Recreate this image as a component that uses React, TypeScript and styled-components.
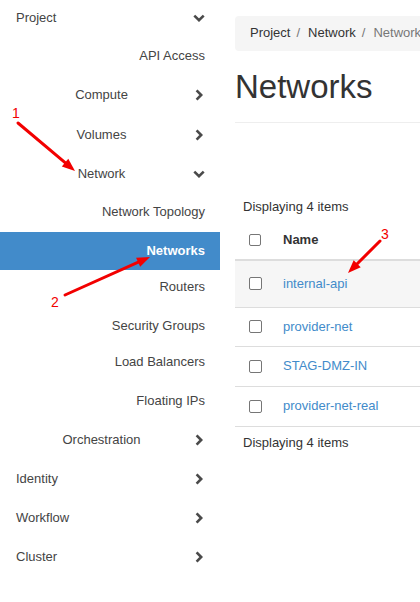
import React from 'react';
import styled, { createGlobalStyle } from 'styled-components';

const GlobalStyle = createGlobalStyle`
  html, body { margin: 0; padding: 0; background: #fff; overflow: hidden; }
  body {
    font-family: "Liberation Sans", Arial, Helvetica, sans-serif;
    font-size: 13px;
    line-height: 18px;
    color: #333;
  }
  * { box-sizing: border-box; }
`;

const Page = styled.div`
  position: relative;
  display: flex;
  width: 420px;
  height: 602px;
  overflow: hidden;
`;

/* ---------- Sidebar ---------- */

type Kind = 'top' | 'group' | 'sub';

const Sidebar = styled.nav`
  flex: 0 0 220px;
  display: flex;
  flex-direction: column;
`;

const NavRow = styled.div<{ $h: number; $active?: boolean }>`
  flex: 0 0 auto;
  display: flex;
  align-items: flex-start;
  height: ${(p) => p.$h}px;
  padding: ${(p) => (p.$active ? '9.5px' : '8.5px')} 15px 0 16px;
  background: ${(p) => (p.$active ? '#428bca' : 'transparent')};
`;

const NavLabel = styled.span<{ $kind: Kind; $active?: boolean }>`
  flex: 1 1 auto;
  min-width: 0;
  white-space: nowrap;
  text-align: ${(p) => (p.$kind === 'top' ? 'left' : p.$kind === 'group' ? 'center' : 'right')};
  color: ${(p) => (p.$active ? '#fff' : '#444')};
  font-weight: ${(p) => (p.$active ? 700 : 400)};
`;

const Chevron = styled.span`
  flex: 0 0 12px;
  margin-left: 6px;
  height: 18px;
  display: flex;
  align-items: center;
  justify-content: center;
  color: #4a4a4a;
`;

const ChevronDown = () => (
  <svg width="12" height="8" viewBox="0 0 12 8">
    <polyline points="1.3,1.6 6,6.2 10.7,1.6" fill="none" stroke="currentColor" strokeWidth="2.6" />
  </svg>
);

const ChevronRight = () => (
  <svg width="8" height="12" viewBox="0 0 8 12">
    <polyline points="1.6,1.3 6.2,6 1.6,10.7" fill="none" stroke="currentColor" strokeWidth="2.6" />
  </svg>
);

type NavItem = { label: string; kind: Kind; h: number; chevron?: 'down' | 'right'; active?: boolean };

const navItems: NavItem[] = [
  { label: 'Project', kind: 'top', h: 38.3, chevron: 'down' },
  { label: 'API Access', kind: 'sub', h: 39.3 },
  { label: 'Compute', kind: 'group', h: 40, chevron: 'right' },
  { label: 'Volumes', kind: 'group', h: 39, chevron: 'right' },
  { label: 'Network', kind: 'group', h: 38.4, chevron: 'down' },
  { label: 'Network Topology', kind: 'sub', h: 37.3 },
  { label: 'Networks', kind: 'sub', h: 37.7, active: true },
  { label: 'Routers', kind: 'sub', h: 38.3 },
  { label: 'Security Groups', kind: 'sub', h: 36.7 },
  { label: 'Load Balancers', kind: 'sub', h: 38.3 },
  { label: 'Floating IPs', kind: 'sub', h: 39 },
  { label: 'Orchestration', kind: 'group', h: 39.3, chevron: 'right' },
  { label: 'Identity', kind: 'top', h: 39, chevron: 'right' },
  { label: 'Workflow', kind: 'top', h: 39.4, chevron: 'right' },
  { label: 'Cluster', kind: 'top', h: 40, chevron: 'right' },
];

/* ---------- Main ---------- */

const Main = styled.main`
  flex: 1 1 auto;
  min-width: 0;
  overflow: hidden;
  padding-left: 15px;
`;

const Content = styled.div`
  width: 420px;
`;

const Breadcrumb = styled.ol`
  list-style: none;
  margin: 16px 0 0;
  padding: 8px 15px 0;
  height: 35px;
  display: flex;
  align-items: flex-start;
  background: #f5f5f5;
  border-radius: 4px;
  white-space: nowrap;
`;

const Crumb = styled.li<{ $current?: boolean }>`
  color: ${(p) => (p.$current ? '#777' : '#333')};
`;

const CrumbSep = styled.span`
  color: #777;
  margin: 0 8px 0 6px;
`;

const PageHeader = styled.div`
  border-bottom: 1px solid #eee;
  padding-bottom: 17px;
`;

const Title = styled.h1`
  margin: 18px 0 0;
  font-size: 33px;
  line-height: 36px;
  font-weight: 400;
  color: #333;
`;

const TableWrap = styled.div`
  margin-top: 74.5px;
`;

const Count = styled.div<{ $gap?: number }>`
  padding-left: 8px;
  margin-top: ${(p) => p.$gap ?? 0}px;
  height: 18px;
  color: #333;
`;

const HeaderRow = styled.div`
  display: flex;
  align-items: center;
  height: 45px;
  padding-top: 6px;
  border-bottom: 2px solid #ddd;
`;

const Row = styled.div<{ $h: number; $shade?: boolean }>`
  display: flex;
  align-items: center;
  height: ${(p) => p.$h}px;
  border-bottom: 1px solid #ddd;
  background: ${(p) => (p.$shade ? '#f6f6f6' : '#fff')};
`;

const CheckCell = styled.div`
  flex: 0 0 48px;
  padding-left: 14px;
  display: flex;
  align-items: center;
`;

const Check = styled.input.attrs({ type: 'checkbox' })<{ $size: number }>`
  appearance: none;
  -webkit-appearance: none;
  margin: 0;
  width: ${(p) => p.$size}px;
  height: ${(p) => p.$size}px;
  border: 1px solid #767676;
  border-radius: 2px;
  background: #fff;
`;

const HeadCell = styled.div`
  font-weight: 700;
  color: #333;
`;

const NameLink = styled.a`
  color: #428bca;
  text-decoration: none;
  white-space: nowrap;
`;

const networks = [
  { name: 'internal-api', h: 47, shade: true },
  { name: 'provider-net', h: 39 },
  { name: 'STAG-DMZ-IN', h: 40 },
  { name: 'provider-net-real', h: 40 },
];

/* ---------- Annotations ---------- */

const Overlay = styled.svg`
  position: absolute;
  left: 0;
  top: 0;
  pointer-events: none;
`;

const NoteText = styled.text`
  font-family: "Liberation Sans", Arial, sans-serif;
  font-size: 14px;
  fill: #f20000;
`;

const Arrow = ({ x1, y1, x2, y2 }: { x1: number; y1: number; x2: number; y2: number }) => {
  const dx = x2 - x1;
  const dy = y2 - y1;
  const len = Math.hypot(dx, dy);
  const ux = dx / len;
  const uy = dy / len;
  const head = 13;
  const half = 5;
  const bx = x2 - ux * head;
  const by = y2 - uy * head;
  const px = -uy;
  const py = ux;
  const pts = `${x2},${y2} ${bx + px * half},${by + py * half} ${bx - px * half},${by - py * half}`;
  return (
    <g>
      <line x1={x1} y1={y1} x2={bx + ux * 2} y2={by + uy * 2} stroke="#f20000" strokeWidth="3" strokeLinecap="round" />
      <polygon points={pts} fill="#f20000" />
    </g>
  );
};

export default function App() {
  return (
    <>
      <GlobalStyle />
      <Page>
        <Sidebar>
          {navItems.map((it) => (
            <NavRow key={it.label} $h={it.h} $active={it.active}>
              <NavLabel $kind={it.kind} $active={it.active}>
                {it.label}
              </NavLabel>
              {it.chevron && <Chevron>{it.chevron === 'down' ? <ChevronDown /> : <ChevronRight />}</Chevron>}
            </NavRow>
          ))}
        </Sidebar>
        <Main>
          <Content>
            <Breadcrumb>
              <Crumb>Project</Crumb>
              <CrumbSep>/</CrumbSep>
              <Crumb>Network</Crumb>
              <CrumbSep>/</CrumbSep>
              <Crumb $current>Networks</Crumb>
            </Breadcrumb>
            <PageHeader>
              <Title>Networks</Title>
            </PageHeader>
            <TableWrap>
              <Count>Displaying 4 items</Count>
              <HeaderRow>
                <CheckCell>
                  <Check $size={12} readOnly />
                </CheckCell>
                <HeadCell>Name</HeadCell>
              </HeaderRow>
              {networks.map((n) => (
                <Row key={n.name} $h={n.h} $shade={n.shade}>
                  <CheckCell>
                    <Check $size={13} readOnly />
                  </CheckCell>
                  <NameLink href="#">{n.name}</NameLink>
                </Row>
              ))}
              <Count $gap={7.5}>Displaying 4 items</Count>
            </TableWrap>
          </Content>
        </Main>
        <Overlay width="420" height="602" viewBox="0 0 420 602">
          <Arrow x1={18} y1={123} x2={75} y2={171} />
          <NoteText x={12} y={117.5}>1</NoteText>
          <Arrow x1={65} y1={295} x2={150} y2={257} />
          <NoteText x={51} y={307}>2</NoteText>
          <Arrow x1={380} y1={241} x2={348} y2={273} />
          <NoteText x={381} y={238.5}>3</NoteText>
        </Overlay>
      </Page>
    </>
  );
}
